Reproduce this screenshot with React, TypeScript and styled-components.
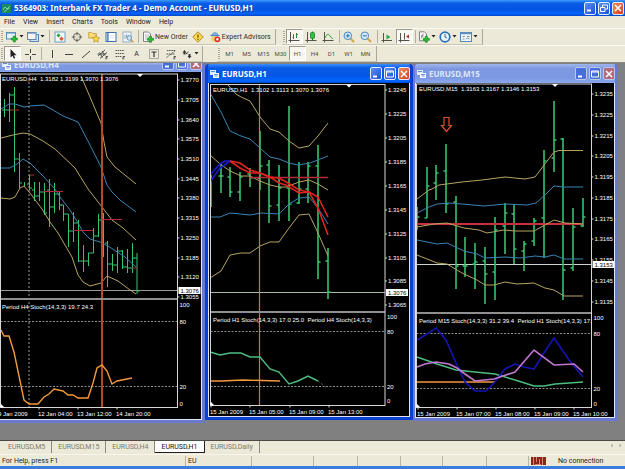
import React from "react";
import styled, { createGlobalStyle, css } from "styled-components";

const GlobalStyle = createGlobalStyle`
  * { box-sizing: border-box; }
  body {
    margin: 0;
    background: #ece9d8;
    color: #1c1c1a;
    font: 7px/10px Roboto, "Noto Sans", sans-serif;
  }
  button {
    margin: 0;
    padding: 0;
    border: 0;
    background: none;
    color: inherit;
    font: inherit;
    white-space: nowrap;
  }
`;

const Shell = styled.div`
  display: flex;
  flex-direction: column;
  min-height: 100vh;
  overflow: hidden;
  border-bottom: 3px solid #3a7ddb;
`;

/* ---------- title bars ---------- */

const TitleBar = styled.header`
  display: flex;
  align-items: center;
  gap: 3px;
  height: 16px;
  padding: 0 1px 0 2px;
  background: linear-gradient(#3f9bfb 0, #0a5ee8 20%, #0353e2 60%, #0464fb 85%, #0243c4 100%);
  color: #fff;
`;

const AppTitle = styled.h1`
  flex: 1;
  margin: 0;
  font: bold 8px/14px "Noto Sans", sans-serif;
  white-space: nowrap;
  text-shadow: 1px 1px 0 #0b3c9c;
`;

const WindowControls = styled.div`
  display: flex;
  gap: 2px;
`;

const ControlButton = styled.button<{ $close?: boolean; $dim?: boolean }>`
  display: grid;
  place-items: center;
  width: 12px;
  height: 13px;
  border: 1px solid ${(p) => (p.$dim ? "#b9c8ee" : "#e4ecff")};
  border-radius: 2px;
  background: ${(p) =>
    p.$close
      ? p.$dim
        ? "#b56a7c"
        : "linear-gradient(135deg, #ee8a68, #d6401a)"
      : p.$dim
        ? "#466fdc"
        : "linear-gradient(135deg, #5c8ff5, #1c50d8)"};
`;

/* ---------- menu and tool bars ---------- */

const MenuBar = styled.nav`
  display: flex;
  align-items: center;
  gap: 8px;
  height: 12px;
  padding-left: 4px;
`;

const ToolRow = styled.div<{ $height: number }>`
  display: flex;
  height: ${(p) => p.$height}px;
  border-top: 1px solid #fbfaf3;
`;

const ToolBar = styled.div<{ $gapAfter?: number }>`
  display: flex;
  align-items: center;
  padding-right: 2px;
  margin-right: ${(p) => p.$gapAfter ?? 0}px;
  border-right: 1px solid #aca899;
  border-bottom: 1px solid #c9c5b2;
`;

const Grip = styled.span`
  width: 2px;
  height: 12px;
  margin: 0 1px;
  background: repeating-linear-gradient(#aaa693 0 1px, #f4f1e4 1px 2px);
`;

const Divider = styled.span<{ $space?: number }>`
  width: 1px;
  height: 13px;
  margin: 0 1px 0 ${(p) => p.$space ?? 2}px;
  background: #b4b09f;
`;

const ToolButton = styled.button<{ $pressed?: boolean; $wide?: boolean }>`
  display: flex;
  align-items: center;
  justify-content: center;
  gap: 1px;
  width: ${(p) => (p.$wide ? "auto" : "17px")};
  height: 15px;
  padding: 0 ${(p) => (p.$wide ? 2 : 0)}px;
  color: #2c2c28;
  ${(p) =>
    p.$pressed &&
    css`
      border: 1px solid;
      border-color: #9d9a8b #fff #fff #9d9a8b;
      background: #f8f7f1;
    `}
`;

const DropButton = styled(ToolButton)`
  width: 21px;
`;

const PeriodButton = styled(ToolButton)`
  font-size: 6px;
  color: #4c4c46;
`;

const Glyph = styled.svg`
  display: block;
  width: 12px;
  height: 12px;
  flex: none;
  overflow: visible;
`;

const CaretShape = styled.svg`
  width: 5px;
  height: 3px;
  flex: none;
`;

const Caret = () => (
  <CaretShape viewBox="0 0 5 3">
    <path d="M0.5 0h4L2.5 2.6z" fill="#222" />
  </CaretShape>
);

const Plus = ({ x, y }: { x: number; y: number }) => (
  <path
    transform={`translate(${x} ${y})`}
    d="M2 0h2v2h2v2H4v2H2V4H0V2h2z"
    fill="#25c02c"
    stroke="#0b7c16"
    strokeWidth=".6"
  />
);

const icons: Record<string, React.ReactNode> = {
  newChart: (
    <>
      <rect x=".5" y="1.5" width="9" height="6.5" fill="#e8f2fa" stroke="#5b87b0" />
      <path d="M1 2.3h8" stroke="#7fb0dc" />
      <Plus x={5.3} y={5} />
    </>
  ),
  profiles: (
    <>
      <rect x="3" y="3.5" width="8.5" height="7" fill="#cfe2f2" stroke="#5b87b0" />
      <rect x=".5" y="1.5" width="8.5" height="7" fill="#eef5fb" stroke="#5b87b0" />
      <path d="M1 2.4h8" stroke="#7fb0dc" />
    </>
  ),
  market: (
    <>
      <rect x="1" y="1" width="10" height="10" fill="#f4fafd" stroke="#6aa0c8" />
      <path d="M2.5 4.5l2-2.3L6.5 4.5 4.5 6.5z" fill="#25a53b" />
      <path d="M5.3 7.8L7.5 5.5l2.2 2.3L7.5 10z" fill="#e0532c" />
    </>
  ),
  dataWindow: (
    <g fill="none" stroke="#65625a">
      <circle cx="6" cy="6" r="3.6" />
      <path d="M6 .8v3.6M6 7.6v3.6M.8 6h3.6M7.6 6h3.6" />
    </g>
  ),
  navigator: (
    <>
      <path d="M.7 1.5h3l1 1h3.6v4.5H.7z" fill="#f8dd78" stroke="#c19a35" strokeWidth=".8" />
      <path d="M8 4.2l1.1 2.3 2.6.3-1.9 1.7.5 2.6L8 9.8l-2.3 1.3.5-2.6-1.9-1.7 2.6-.3z" fill="#fddf4d" stroke="#b98a16" strokeWidth=".7" />
    </>
  ),
  terminal: (
    <>
      <rect x="1" y="1.5" width="10" height="9" fill="#fff" stroke="#3f70ad" />
      <path d="M2.8 2v8" stroke="#5b93d0" strokeWidth="1.8" />
      <path d="M5.5 4.5h4M5.5 6.5h4" stroke="#cbd5df" strokeWidth=".7" />
    </>
  ),
  tester: (
    <>
      <rect x="1" y="1" width="8" height="10" fill="#f4f7fa" stroke="#93aec6" />
      <path d="M3 8V4M4.7 7V3M6.4 8V4" stroke="#6f93b6" strokeWidth=".8" />
      <circle cx="7.3" cy="7" r="2.3" fill="#cfe5f6" stroke="#5c87b2" strokeWidth=".8" />
      <path d="M9 8.8l2.3 2.4" stroke="#c69b3d" strokeWidth="1.4" />
    </>
  ),
  order: (
    <>
      <path d="M1.5 1h5l2 2v7.5h-7z" fill="#fafafa" stroke="#77777a" strokeWidth=".9" />
      <path d="M3 4h4M3 6h4M3 8h2" stroke="#8f959c" strokeWidth=".7" />
      <Plus x={5.5} y={5.3} />
    </>
  ),
  editor: (
    <>
      <path d="M6 .8L11.2 6 6 11.2.8 6z" fill="#fbd84b" stroke="#b98d1c" />
      <path d="M6 3.5v3.3M6 7.8v1.2" stroke="#6a4e0c" strokeWidth="1.2" />
    </>
  ),
  experts: (
    <>
      <path d="M.8 4.6C2 3.6 10 3.6 11.2 4.6 9 5.8 3 5.8.8 4.6z" fill="#4a8ecb" />
      <path d="M3 4.3C3 .8 9 .8 9 4.3z" fill="#7dbbe8" stroke="#3a76ad" strokeWidth=".6" />
      <path d="M2.5 5.5h6v4l-3 1.6-3-1.6z" fill="#f4cd62" />
      <circle cx="8.4" cy="8.3" r="2.9" fill="#d93023" />
      <rect x="7.3" y="7.2" width="2.2" height="2.2" fill="#fff" />
    </>
  ),
  bars: (
    <g fill="none" stroke="#55524a">
      <path d="M2.5 1v10.5M.5 9.5h11" />
      <path d="M5.5 3v5M4.5 6.5h1M8.5 2v5M8.5 3.5h1.5" stroke="#25883a" />
    </g>
  ),
  candles: (
    <>
      <path d="M2.5 1v10.5M.5 9.5h11" fill="none" stroke="#55524a" />
      <path d="M7.5 .5v9" stroke="#1c7d2c" />
      <rect x="5.5" y="1.5" width="4" height="6" rx="1" fill="#35c045" stroke="#1c7d2c" strokeWidth=".8" />
    </>
  ),
  line: (
    <g fill="none" stroke="#55524a">
      <path d="M2.5 1v10.5M.5 9.5h11" />
      <path d="M3 7C5 2 7 3 8 5s2 2 3 2.5" stroke="#2d9a40" />
    </g>
  ),
  zoomIn: (
    <>
      <path d="M7.5 7.5l3.5 3.5" stroke="#d1a843" strokeWidth="2" />
      <circle cx="4.8" cy="4.8" r="3.8" fill="#d3ebfb" stroke="#4a87bd" />
      <path d="M4.8 2.8v4M2.8 4.8h4" stroke="#2c6aa8" />
    </>
  ),
  zoomOut: (
    <>
      <path d="M7.5 7.5l3.5 3.5" stroke="#d1a843" strokeWidth="2" />
      <circle cx="4.8" cy="4.8" r="3.8" fill="#d3ebfb" stroke="#4a87bd" />
      <path d="M2.8 4.8h4" stroke="#2c6aa8" />
    </>
  ),
  scroll: (
    <>
      <path d="M2.5 2v9.5M.5 9.5h10.5" fill="none" stroke="#55524a" />
      <path d="M5.5 3.5l4 2.5-4 2.5z" fill="#2fa440" />
    </>
  ),
  shift: (
    <>
      <path d="M2.5 2v9.5M.5 9.5h11M6.5 2v6.5" fill="none" stroke="#55524a" />
      <path d="M8 5.5l3-2v4z" fill="#a63a2e" />
    </>
  ),
  indicators: (
    <>
      <path d="M1.5 .8h5l2 2v7h-7z" fill="#f4f4f4" stroke="#77777a" strokeWidth=".9" />
      <path d="M3 7.5c1 0 1-4.5 2.5-4.5M3 5h2.5" fill="none" stroke="#666" strokeWidth=".8" />
      <Plus x={5.3} y={5.3} />
    </>
  ),
  clock: (
    <>
      <circle cx="6" cy="6" r="4.8" fill="#e9f5fd" stroke="#2c71bb" strokeWidth="1.7" />
      <path d="M6 3v3l2 1" fill="none" stroke="#44637f" />
    </>
  ),
  template: (
    <>
      <rect x=".5" y="1.5" width="11" height="9" fill="#eef5fb" stroke="#5b87b0" />
      <path d="M1 2.5h10" stroke="#5f94c6" strokeWidth="1.5" />
      <path d="M2.5 5.5h2.5M7 5.5h2.5M2.5 8h2M6 8l1.5-1L9.5 8" fill="none" stroke="#6d7b88" strokeWidth=".8" />
    </>
  ),
  cursor: <path d="M3.5 1v8.5l2-1.8 1.4 3 1.3-.6-1.4-2.9h2.7z" fill="#222" />,
  cross: <path d="M6.5 1v4M6.5 8v4M1 6.5h4M8 6.5h4" stroke="#444" fill="none" />,
  vline: <path d="M6.5 2v8" stroke="#444" />,
  hline: <path d="M2 6.5h8" stroke="#444" />,
  trend: <path d="M2 10l8-7" stroke="#444" />,
  channel: (
    <g stroke="#444" fill="none" strokeWidth=".9">
      <path d="M1 8l7-6M3 10.5l7-6M2.5 4.5l3 5M5 3l3 4.5M.5 6h8" />
      <path d="M9 11.5v-3h2M9 10h1.5" />
    </g>
  ),
  fibo: (
    <g stroke="#555" fill="none">
      <path d="M1.5 2.5h9M1.5 5.5h9M1.5 8.5h6" strokeDasharray="1.5 .7" />
      <path d="M9 11.5V8.5h2M9 10h1.5" />
    </g>
  ),
  label: (
    <>
      <rect x="1.5" y="1.5" width="9" height="9" fill="none" stroke="#666" strokeDasharray="1 1" />
      <path d="M3.5 4h5M6 4v5" stroke="#333" strokeWidth="1.2" />
    </>
  ),
  fan: (
    <g stroke="#555" fill="none">
      <path d="M2 2.5h9M1.5 9.5L10 3M1.5 6h8" strokeDasharray="1.5 .7" />
      <path d="M9 11.5V8.5h2M9 10h1.5" />
    </g>
  ),
  arrows: (
    <>
      <path d="M3.5 2l2 2.5H4.5v2h-2v-2h-1z" fill="#333" />
      <path d="M8.5 10.5l-2-2.5h1V6h2v2h1z" fill="#333" />
      <path d="M5 6l2.5-2" stroke="#333" />
    </>
  ),
};

const Icon = ({ name }: { name: string }) => <Glyph viewBox="0 0 12 12">{icons[name]}</Glyph>;

const Tool = ({ name, label, pressed }: { name: string; label: string; pressed?: boolean }) => (
  <ToolButton aria-label={label} $pressed={pressed}>
    <Icon name={name} />
  </ToolButton>
);

const DropTool = ({ name, label }: { name: string; label: string }) => (
  <DropButton aria-label={label}>
    <Icon name={name} />
    <Caret />
  </DropButton>
);

const Controls = ({ dim, restore }: { dim?: boolean; restore?: boolean }) => (
  <WindowControls>
    <ControlButton $dim={dim} aria-label="Minimize">
      <svg width="8" height="8" viewBox="0 0 8 8">
        <path d="M1 6.5h4" stroke="#fff" strokeWidth="2" />
      </svg>
    </ControlButton>
    <ControlButton $dim={dim} aria-label={restore ? "Restore" : "Maximize"}>
      <svg width="8" height="8" viewBox="0 0 8 8">
        <path
          d={restore ? "M2.5 3V1h5v4h-2M.5 3.5h4.5v4H.5z" : "M.5 1h7v6h-7zM.5 2h7"}
          fill="none"
          stroke="#fff"
        />
      </svg>
    </ControlButton>
    <ControlButton $close $dim={dim} aria-label="Close">
      <svg width="8" height="8" viewBox="0 0 8 8">
        <path d="M1 1l6 6M7 1L1 7" stroke="#fff" strokeWidth="1.5" />
      </svg>
    </ControlButton>
  </WindowControls>
);

/* ---------- workspace ---------- */

const Workspace = styled.main`
  flex: 1;
  display: grid;
  grid-template-columns: 205fr 208fr 205fr 7fr;
  align-items: start;
  border-top: 1px solid #8c8a80;
  background: #808080;
`;

const ChartWindow = styled.section<{ $active?: boolean; $first?: boolean }>`
  margin-top: ${(p) => (p.$first ? 0 : 1)}px;
  border: solid ${(p) => (p.$active ? "#0a3fd0" : "#6a78d0")};
  border-width: 0 3px 3px ${(p) => (p.$first ? 0 : p.$active ? 3 : 2)}px;
  border-radius: ${(p) => (p.$first ? 0 : "4px 4px 0 0")};
  background: ${(p) => (p.$active ? "#0a3fd0" : "#6a78d0")};
  overflow: hidden;
`;

const ChartTitle = styled.header<{ $active?: boolean; $cut?: boolean }>`
  display: flex;
  align-items: ${(p) => (p.$cut ? "flex-end" : "center")};
  gap: 3px;
  height: ${(p) => (p.$cut ? 9 : 19)}px;
  padding: 0 0 ${(p) => (p.$cut ? 2 : 0)}px 2px;
  overflow: hidden;
  color: ${(p) => (p.$active ? "#fff" : "#dce6fb")};
  background: ${(p) =>
    p.$active
      ? "linear-gradient(#3b8ffa 0, #0a5ce6 20%, #0456e8 60%, #0566ff 90%, #0349c8 100%)"
      : "linear-gradient(#9fb6ec 0, #7d98e0 25%, #7c97e2 70%, #89a8ee 100%)"};
`;

const ChartName = styled.h2`
  flex: 1;
  margin: 0;
  font: bold 8px/11px "Noto Sans", sans-serif;
  white-space: nowrap;
`;

const ChartSvg = styled.svg<{ $first?: boolean }>`
  display: block;
  width: 100%;
  height: auto;
  border: solid #dfe4f6;
  border-width: 0 1px 1px ${(p) => (p.$first ? 0 : 1)}px;
  background: #000;
  font: 6px "Liberation Sans", Arial, sans-serif;
  fill: #fff;
`;

type Bar = [x: number, high: number, low: number, open?: number, close?: number];
type Curve = { color: string; points: string; width?: number; dash?: string };

interface ChartData {
  id: string;
  name: string;
  view: [number, number, number, number];
  quote: string;
  quoteX: number;
  plot: { left: number; top: number; right: number; split: number; bottom: number };
  prices: [string, number][];
  bid: [string, number];
  bidColor: string;
  times: [string, number][];
  levels: { top: number; high: number; low: number; zero: number };
  stochTitle: string;
  marker: number;
  bars: Bar[];
  barWidth: number;
  curves: Curve[];
  extra?: React.ReactNode;
}

const SAND = "#b5a560";
const STEEL = "#3a83b4";
const GREEN = "#35c46e";
const CRIMSON = "#b8283a";
const ORANGE = "#f39a3c";
const MINT = "#4dbd80";

const h4: ChartData = {
  id: "h4",
  name: "EURUSD,H4",
  view: [0, 72, 201, 347],
  quote: "EURUSD,H4  1.3182 1.3199 1.3070 1.3076",
  quoteX: 2,
  plot: { left: 0.5, top: 74, right: 177.5, split: 299, bottom: 407.5 },
  prices: [
    ["1.3770", 80], ["1.3705", 100], ["1.3640", 120], ["1.3575", 139], ["1.3510", 159], ["1.3445", 179],
    ["1.3380", 198], ["1.3315", 218], ["1.3250", 238], ["1.3185", 258], ["1.3120", 277], ["1.3055", 297],
  ],
  bid: ["1.3076", 290.5],
  bidColor: "#9a9a9a",
  times: [["9 Jan 2009", -2], ["12 Jan 04:00", 38], ["13 Jan 12:00", 77], ["14 Jan 20:00", 116]],
  levels: { top: 305, high: 321.5, low: 386.5, zero: 404 },
  stochTitle: "Period H4 Stoch(14,3,3) 19.7 24.3",
  marker: 140,
  barWidth: 1,
  bars: [
    [4.5, 99, 117, 110, 110], [9.5, 93, 122, 110, 95], [14.5, 87, 172, 95, 159], [19.5, 153, 188, 159, 183],
    [24.5, 182, 187], [29.5, 175, 190, 184, 188], [34.5, 182, 201, 190, 196], [39.5, 182, 201, 196, 192],
    [44.5, 183, 215, 192, 213], [49.5, 179, 227, 190, 207], [54.5, 183, 213, 207, 194], [59.5, 192, 210, 194, 205],
    [63.5, 205, 221, 205, 214], [68.5, 214, 247, 214, 231], [73.5, 212, 242, 231, 223], [78.5, 220, 262, 223, 261],
    [83.5, 245, 272, 261, 261], [88.5, 253, 266, 261, 253], [93.5, 228, 253, 253, 236], [98.5, 214, 237, 236, 220],
    [103.5, 213, 257], [107.5, 241, 287, 243, 264], [112.5, 254, 271, 264, 265], [117.5, 247, 273, 265, 251],
    [122.5, 250, 269, 251, 267], [127.5, 249, 273, 267, 268], [132.5, 243, 273, 268, 258], [137, 253, 294, 258, 291],
  ],
  curves: [
    { color: SAND, points: "81,76 90,97 101,123 104,142 107,157 115,167 136,184" },
    { color: STEEL, points: "1,109 9,104 15,104 24,107 30,106 44,105 53,110 63,116 78,122 90,145 101,167 107,185 112,192 120,200 136,212" },
    { color: SAND, points: "1,138 13,135 23,133 30,134 43,141 55,149 75,168 88,189 102,207 112,220 123,228 136,240" },
    { color: STEEL, points: "1,168 10,168 17,164 23,159 30,163 42,175 55,189 60,197 70,210 78,223 83,232 90,239 100,242 108,246 125,257 136,267" },
    { color: SAND, points: "1,198 10,199 15,197 20,188 24,186 30,193 42,209 50,222 58,233 72,257 78,275 83,282 90,286 101,283 107,276 118,281 130,290 136,294" },
    { color: CRIMSON, points: "10,110 19,110" },
    { color: CRIMSON, points: "30,175 34,175" },
    { color: CRIMSON, points: "44,191.5 63,191.5" },
    { color: CRIMSON, points: "73,230.5 93,230.5" },
    { color: CRIMSON, points: "102,219.5 122,219.5" },
    { color: CRIMSON, points: "132,268 137,268" },
    { color: "#9c9c9c", points: "29,74 29,407", dash: "2 2" },
    { color: "#b2492c", points: "102,74 102,407", width: 2 },
    { color: ORANGE, width: 1.4, points: "1,330 4,336 9,336 14,352 24,400 29,404 38,404 44,397 49,394 54,389 63,391 68,395 73,395 78,398 88,398 93,383 97,368 102,365 107,371 112,384 117,381 132,378" },
  ],
};

const h1: ChartData = {
  id: "h1",
  name: "EURUSD,H1",
  view: [209, 83, 200, 333],
  quote: "EURUSD,H1  1.3102 1.3113 1.3070 1.3076",
  quoteX: 213,
  plot: { left: 210.5, top: 84.5, right: 385, split: 312, bottom: 405.5 },
  prices: [
    ["1.3245", 90], ["1.3225", 114], ["1.3205", 138], ["1.3185", 162], ["1.3165", 186],
    ["1.3145", 210], ["1.3125", 234], ["1.3105", 258], ["1.3085", 281], ["1.3065", 305],
  ],
  bid: ["1.3076", 292.5],
  bidColor: "#a9b8a9",
  times: [["15 Jan 2009", 210], ["15 Jan 05:00", 249], ["15 Jan 09:00", 289], ["15 Jan 13:00", 328]],
  levels: { top: 317, high: 331.5, low: 386.5, zero: 401 },
  stochTitle: "Period H1 Stoch(14,3,3) 17.0 25.0  Period H4 Stoch(14,3,3)",
  marker: 349,
  barWidth: 1.6,
  bars: [
    [211, 175, 207], [221, 164, 193, 176, 176], [230, 167, 197, 177, 192], [240, 172, 201, 192, 177], [250, 168, 187, 174, 178],
    [260, 131, 190, 178, 166], [269, 160, 223, 165, 206], [279, 165, 221, 205, 188], [289, 106, 221, 188, 204],
    [299, 162, 204, 203, 189], [308, 162, 203, 189, 166], [318, 145, 279, 166, 262], [328, 248, 299, 261, 292],
  ],
  curves: [
    { color: SAND, points: "228,85 236,94 241,97 250,101 260,117 270,129 279,132 289,141 299,148 309,146 318,136 328,123" },
    { color: STEEL, points: "210,93 221,112 230,131 241,136 250,139 260,148 270,157 279,159 289,163 298,165 310,163 328,156" },
    { color: SAND, points: "210,155 220,164 230,171 241,176 250,176 260,181 270,185 279,187 286,187 299,182 309,180 318,184 328,190" },
    { color: STEEL, points: "210,217 220,217 230,213 250,215 261,213 279,214 289,204 299,198 309,197 318,208 328,224" },
    { color: SAND, points: "210,278 221,271 230,255 241,253 250,253 260,246 270,242 279,242 289,228 299,215 309,214 318,233 328,256" },
    { color: CRIMSON, width: 1.4, points: "250,177.5 328,177.5" },
    { color: "#ee6a2a", points: "259.5,84 259.5,405", width: 1.2 },
    { color: "#1a1ad0", width: 1.6, points: "210,175 220,164 225,161 230,161" },
    { color: "#1a1ad0", width: 1.6, points: "210,182 220,168 230,161" },
    { color: "#e0231c", width: 1.6, points: "230,161 240,163 250,170 260,173 270,177 279,178 288,183 299,190 309,192 318,197 328,217" },
    { color: "#e0231c", width: 1.6, points: "230,161 240,168 250,173 260,173 270,177 279,183 286,185 299,193 309,192 318,208 328,235" },
    { color: MINT, width: 1.4, points: "210,352 220,355 230,353 241,353 250,357 260,357 270,369 279,372 289,384 298,381 308,376 318,381" },
    { color: "#4f6b5a", dash: "2 2", points: "318,381 327,388" },
    { color: ORANGE, width: 1.4, points: "210,381 221,381 243,380 280,381" },
  ],
};

const m15: ChartData = {
  id: "m15",
  name: "EURUSD,M15",
  view: [416, 83, 198, 334],
  quote: "EURUSD,M15  1.3163 1.3167 1.3146 1.3153",
  quoteX: 419,
  plot: { left: 416.5, top: 84, right: 591.5, split: 313, bottom: 407.5 },
  prices: [
    ["1.3235", 94], ["1.3225", 115], ["1.3215", 136], ["1.3205", 156], ["1.3195", 177], ["1.3185", 198],
    ["1.3175", 219], ["1.3165", 239], ["1.3155", 260], ["1.3145", 281], ["1.3135", 302],
  ],
  bid: ["1.3153", 264.5],
  bidColor: "#c9d3c9",
  times: [["15 Jan 2009", 417], ["15 Jan 07:00", 456], ["15 Jan 08:00", 495], ["15 Jan 09:00", 534], ["15 Jan 10:00", 573]],
  levels: { top: 318, high: 333.5, low: 388.5, zero: 404 },
  stochTitle: "Period M15 Stoch(14,3,3) 31.2 39.4  Period H1 Stoch(14,3,3) 17.0 2",
  marker: 555,
  barWidth: 1.6,
  bars: [
    [417, 207, 230, 217, 217], [427, 167, 218, 218, 186], [436, 165, 200, 183, 173], [446, 144, 213, 171, 204],
    [456, 196, 289, 202, 266], [465, 237, 277, 266, 266], [475, 243, 289, 264, 262], [485, 247, 304, 261, 274],
    [495, 217, 300, 272, 230], [505, 203, 254, 226, 213], [514, 204, 264, 214, 249], [524, 241, 271, 251, 244],
    [534, 218, 246, 241, 221], [544, 150, 258, 218, 161], [554, 101, 172, 158, 140], [563, 138, 300, 139, 270],
    [573, 208, 271, 268, 227], [583, 198, 227, 226, 217],
  ],
  curves: [
    { color: SAND, points: "417,199 429,190 432,189 439,185 462,182 482,180 505,177 525,179 535,177 554,152 559,150.5 583,150.5" },
    { color: STEEL, points: "417,213 429,207 437,204 449,203 462,204 484,206 505,204 527,205 536,203 545,195 554,186 564,187 583,187" },
    { color: "#c8303c", width: 1.8, points: "417,224 583,224" },
    { color: SAND, points: "417,227 434,224 447,223 464,228 479,230 487,233 504,230 515,231 534,231 545,225 554,220 565,223 583,224" },
    { color: STEEL, points: "417,240 437,244 447,243 464,251 477,254 485,258 505,257 520,258 535,256 545,257 554,255 564,259 583,259" },
    { color: SAND, points: "417,255 437,263 447,264 462,273 477,280 485,285 494,285 505,282 517,284 534,283 545,288 554,290 564,296 583,296" },
    { color: MINT, width: 1.4, points: "417,357 437,364 456,370 475,372 495,374 515,380 534,386 544,386 555,384 583,382" },
    { color: ORANGE, width: 1.6, points: "417,382 495,382" },
    { color: "#1414b4", width: 1.6, points: "417,340 427,334 436,328 446,340 456,363 465,382 475,391 486,391 494,383 505,369 515,364 524,367 534,369 544,353 554,338 569,360 583,377" },
    { color: "#c277d2", width: 1.6, points: "417,367 425,364 436,362 449,364 457,368 465,374 475,381 494,379 515,372 534,350 554,365 574,364 583,372" },
  ],
  extra: <path d="M444 117.5h5v8h2.5l-5 6-5-6h2.5z" fill="none" stroke="#d9532c" strokeWidth="1.2" />,
};

const Chart = ({ data, first }: { data: ChartData; first?: boolean }) => {
  const { plot, levels } = data;
  const clip = `plot-${data.id}`;
  return (
    <ChartSvg $first={first} viewBox={data.view.join(" ")} role="img" aria-label={`${data.name} chart`}>
      <clipPath id={clip}>
        <rect x={plot.left} y={plot.top} width={plot.right - plot.left} height={plot.bottom - plot.top} />
      </clipPath>
      <g clipPath={`url(#${clip})`}>
        <path d={`M${plot.left} ${data.bid[1]}H${plot.right}`} stroke={data.bidColor} />
        <path
          d={`M${plot.left} ${levels.high}H${plot.right}M${plot.left} ${levels.low}H${plot.right}`}
          stroke="#8d8d8d"
          strokeDasharray="2 1.5"
        />
        {data.bars.map(([x, high, low, open, close]) => (
          <path
            key={x}
            d={`M${x} ${high}V${low}${open ? `M${x - 2.5} ${open}H${x}` : ""}${close ? `M${x} ${close}h2.5` : ""}`}
            stroke={GREEN}
            strokeWidth={data.barWidth}
          />
        ))}
        {data.curves.map((c, i) => (
          <polyline key={i} points={c.points} fill="none" stroke={c.color} strokeWidth={c.width ?? 1} strokeDasharray={c.dash} />
        ))}
        {data.extra}
        <text x={data.quoteX} y={plot.top + 7} xmlSpace="preserve">{data.quote}</text>
        <text x={data.quoteX} y={plot.split + 10} xmlSpace="preserve">{data.stochTitle}</text>
      </g>
      <path d={`M${plot.left} ${plot.split}H${plot.right}`} stroke="#8f8f8f" strokeWidth="2" />
      <rect
        x={plot.left}
        y={plot.top}
        width={plot.right - plot.left}
        height={plot.bottom - plot.top}
        fill="none"
        stroke="#d6d6d6"
      />
      <path d={`M${data.marker - 3} ${plot.top}h6l-3 3z`} />
      <path d={`M${plot.left} ${plot.bottom}v-4l4 4z`} />
      {data.prices.map(([label, y]) => (
        <g key={label}>
          <path d={`M${plot.right} ${y}h2`} stroke="#d6d6d6" />
          <text x={plot.right + 3} y={y + 2}>{label}</text>
        </g>
      ))}
      <rect x={plot.right + 1} y={data.bid[1] - 3.5} width="22" height="7" />
      <text x={plot.right + 3} y={data.bid[1] + 2} fill="#000">{data.bid[0]}</text>
      <text x={plot.right + 2} y={levels.top + 2}>100</text>
      <text x={plot.right + 2} y={levels.high + 2}>80</text>
      <text x={plot.right + 2} y={levels.low + 2}>20</text>
      <text x={plot.right + 2} y={levels.zero + 2}>0</text>
      {data.times.map(([label, x]) => (
        <g key={label}>
          <path d={`M${x + 1} ${plot.bottom}v2`} stroke="#d6d6d6" />
          <text x={x} y={plot.bottom + 8}>{label}</text>
        </g>
      ))}
    </ChartSvg>
  );
};

const ChartIcon = () => (
  <svg width="9" height="8" viewBox="0 0 9 8">
    <path d="M0 0h6v5H0z" fill="#dfeaff" />
    <path d="M3 3h6v5H3z" fill="#fff" />
    <path d="M1 1.5h4M4 4.5h4M4.5 6h3" stroke="#3d74d4" strokeWidth=".8" />
  </svg>
);

/* ---------- tabs and status ---------- */

const TabBar = styled.nav`
  display: flex;
  align-items: flex-start;
  height: 14px;
  padding-left: 2px;
  border-top: 1px solid #4a4a46;
`;

const Tab = styled.button<{ $active?: boolean }>`
  height: 12px;
  padding: 0 6px;
  color: ${(p) => (p.$active ? "#111" : "#7d7b70")};
  border-right: 1px solid ${(p) => (p.$active ? "#222" : "#8d8a7c")};
  ${(p) =>
    p.$active &&
    css`
      background: #fff;
      border-bottom: 1px solid #222;
    `}
`;

const TabArrows = styled.div`
  display: flex;
  gap: 6px;
  margin-left: auto;
  padding-right: 4px;
  color: #55534b;
`;

const StatusBar = styled.footer`
  display: grid;
  grid-template-columns: 185fr 66fr 62fr 44fr 43fr 42fr 44fr 42fr 97fr;
  align-items: center;
  height: 12px;
  border-top: 1px solid #f8f6ec;
`;

const StatusCell = styled.span`
  display: flex;
  align-items: center;
  gap: 12px;
  height: 10px;
  padding-left: 2px;
  white-space: nowrap;
  & + & {
    border-left: 1px solid #b9b5a3;
  }
`;

const menus = ["File", "View", "Insert", "Charts", "Tools", "Window", "Help"];
const periods = ["M1", "M5", "M15", "M30", "H1", "H4", "D1", "W1", "MN"];
const tabs = ["EURUSD,M5", "EURUSD,M15", "EURUSD,H4", "EURUSD,H1", "EURUSD,Daily"];

export default function App() {
  return (
    <Shell>
      <GlobalStyle />
      <TitleBar>
        <svg width="9" height="9" viewBox="0 0 9 9">
          <rect width="9" height="9" rx="1" fill="#1d8a5c" />
          <path d="M1 6l2-3 2 2 3-3M2 8l5-4" fill="none" stroke="#7fd6a2" />
        </svg>
        <AppTitle>5364903: Interbank FX Trader 4 - Demo Account - EURUSD,H1</AppTitle>
        <Controls restore />
      </TitleBar>
      <MenuBar aria-label="Menu">
        {menus.map((m) => (
          <button key={m}>{m}</button>
        ))}
      </MenuBar>
      <ToolRow $height={17}>
        <ToolBar $gapAfter={6}>
          <Grip />
          <DropTool name="newChart" label="New chart" />
          <DropTool name="profiles" label="Profiles" />
          <Divider $space={3} />
          <Tool name="market" label="Market watch" />
          <Tool name="dataWindow" label="Data window" />
          <Tool name="navigator" label="Navigator" />
          <Tool name="terminal" label="Terminal" />
          <Tool name="tester" label="Strategy tester" />
          <Divider />
          <ToolButton $wide>
            <Icon name="order" />
            New Order
          </ToolButton>
          <Tool name="editor" label="MetaEditor" />
          <ToolButton $wide>
            <Icon name="experts" />
            Expert Advisors
          </ToolButton>
        </ToolBar>
        <ToolBar>
          <Grip />
          <Tool name="bars" label="Bar chart" pressed />
          <Tool name="candles" label="Candlesticks" />
          <Tool name="line" label="Line chart" />
          <Divider />
          <Tool name="zoomIn" label="Zoom in" />
          <Tool name="zoomOut" label="Zoom out" />
          <Divider />
          <Tool name="scroll" label="Auto scroll" />
          <Tool name="shift" label="Chart shift" pressed />
          <Divider />
          <DropTool name="indicators" label="Indicators" />
          <DropTool name="clock" label="Periods" />
          <DropTool name="template" label="Templates" />
        </ToolBar>
      </ToolRow>
      <ToolRow $height={17}>
        <ToolBar $gapAfter={14}>
          <Grip />
          <Tool name="cursor" label="Cursor" pressed />
          <Tool name="cross" label="Crosshair" />
          <Divider $space={3} />
          <Tool name="vline" label="Vertical line" />
          <Tool name="hline" label="Horizontal line" />
          <Tool name="trend" label="Trendline" />
          <Tool name="channel" label="Channel" />
          <Tool name="fibo" label="Fibonacci retracement" />
          <ToolButton>A</ToolButton>
          <Tool name="label" label="Text label" />
          <Tool name="fan" label="Fibonacci fan" />
          <DropTool name="arrows" label="Arrows" />
        </ToolBar>
        <ToolBar>
          <Grip />
          {periods.map((p) => (
            <PeriodButton key={p} $pressed={p === "H1"}>
              {p}
            </PeriodButton>
          ))}
        </ToolBar>
      </ToolRow>
      <Workspace>
        {[h4, h1, m15].map((data) => {
          const active = data.id === "h1";
          const cut = data.id === "h4";
          return (
            <ChartWindow key={data.id} $active={active} $first={cut}>
              <ChartTitle $active={active} $cut={cut}>
                <ChartIcon />
                <ChartName>{data.name}</ChartName>
                <Controls dim={!active} />
              </ChartTitle>
              <Chart data={data} first={cut} />
            </ChartWindow>
          );
        })}
      </Workspace>
      <TabBar aria-label="Charts">
        {tabs.map((t) => (
          <Tab key={t} $active={t === "EURUSD,H1"}>
            {t}
          </Tab>
        ))}
        <TabArrows>
          <button aria-label="Previous">‹</button>
          <button aria-label="Next">›</button>
        </TabArrows>
      </TabBar>
      <StatusBar>
        <StatusCell>For Help, press F1</StatusCell>
        <StatusCell>EU</StatusCell>
        <StatusCell />
        <StatusCell />
        <StatusCell />
        <StatusCell />
        <StatusCell />
        <StatusCell />
        <StatusCell>
          <svg width="15" height="8" viewBox="0 0 15 8">
            <rect width="15" height="8" fill="#8c2418" />
            <path d="M2.5 0v8M5.5 0v5M8.5 2v6M11.5 0v8M4 7.5h6" stroke="#e0a08c" strokeWidth=".8" />
          </svg>
          No connection
        </StatusCell>
      </StatusBar>
    </Shell>
  );
}
